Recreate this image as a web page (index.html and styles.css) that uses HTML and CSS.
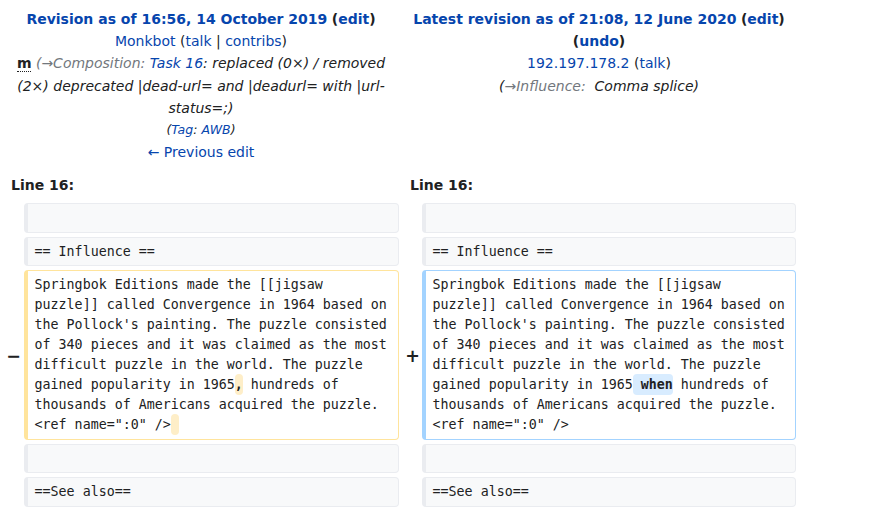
FILE: index.html
```html
<!DOCTYPE html>
<html>
<head>
<meta charset="utf-8">
<link rel="stylesheet" href="styles.css">
</head>
<body>
<div class="diff">
  <div class="titles">
    <div class="title">
      <div><a class="strong" href="#">Revision as of 16:56, 14 October 2019</a> <span class="strong">(<a href="#">edit</a>)</span></div>
      <div><a href="#">Monkbot</a> (<a href="#">talk</a> | <a href="#">contribs</a>)</div>
      <div><abbr class="minor">m</abbr> <span class="comment"><span class="auto">(→Composition: </span><a href="#">Task 16</a>: replaced (0×) / removed (2×) deprecated |dead-url= and |deadurl= with |url-status=;)</span></div>
      <div class="tags">(<a href="#">Tag</a>: <a href="#">AWB</a>)</div>
      <div><a href="#">← Previous edit</a></div>
    </div>
    <div class="title">
      <div><a class="strong" href="#">Latest revision as of 21:08, 12 June 2020</a> <span class="strong">(<a href="#">edit</a>)</span> <span class="strong">(<a href="#">undo</a>)</span></div>
      <div><a href="#">192.197.178.2</a> (<a href="#">talk</a>)</div>
      <div><span class="comment">(<span class="auto">→Influence: </span>&nbsp;Comma splice)</span></div>
    </div>
  </div>
  <div class="rows">
    <div class="lineno left">Line 16:</div>
    <div class="lineno right">Line 16:</div>

    <div class="marker"></div>
    <div class="cell context"></div>
    <div class="marker"></div>
    <div class="cell context"></div>

    <div class="marker"></div>
    <div class="cell context">== Influence ==</div>
    <div class="marker"></div>
    <div class="cell context">== Influence ==</div>

    <div class="marker">−</div>
    <div class="cell deleted">Springbok Editions made the [[jigsaw puzzle]] called Convergence in 1964 based on the Pollock's painting. The puzzle consisted of 340 pieces and it was claimed as the most difficult puzzle in the world. The puzzle gained popularity in 1965<span class="change">,</span> hundreds of thousands of Americans acquired the puzzle. &lt;ref name=":0" /&gt;<span class="change">&nbsp;</span></div>
    <div class="marker plus">+</div>
    <div class="cell added">Springbok Editions made the [[jigsaw puzzle]] called Convergence in 1964 based on the Pollock's painting. The puzzle consisted of 340 pieces and it was claimed as the most difficult puzzle in the world. The puzzle gained popularity in 1965<span class="change"> when</span> hundreds of thousands of Americans acquired the puzzle. &lt;ref name=":0" /&gt;</div>

    <div class="marker"></div>
    <div class="cell context"></div>
    <div class="marker"></div>
    <div class="cell context"></div>

    <div class="marker"></div>
    <div class="cell context">==See also==</div>
    <div class="marker"></div>
    <div class="cell context">==See also==</div>
  </div>
</div>
</body>
</html>
```

FILE: styles.css
```css
html, body {
  margin: 0;
  padding: 0;
  background: #ffffff;
}
body {
  padding: 8px 8px 0 8px;
  font-family: "DejaVu Sans", sans-serif;
  font-size: 14px;
  color: #202122;
}
a {
  color: #0645ad;
  text-decoration: none;
}
.titles {
  display: grid;
  grid-template-columns: 386px 394px;
  column-gap: 8px;
  width: 788px;
}
.title {
  text-align: center;
  line-height: 22.2px;
}
.strong {
  font-weight: bold;
}
.minor {
  font-weight: bold;
  text-decoration: none;
  border-bottom: 1px dotted #202122;
  cursor: help;
}
.comment {
  font-style: italic;
  color: #202122;
}
.auto {
  color: #72777d;
}
.tags {
  font-style: italic;
  font-size: 12.5px;
}
.rows {
  display: grid;
  grid-template-columns: 16px 375px 23px 374px;
  row-gap: 4px;
  margin-top: 11px;
}
.lineno {
  font-weight: bold;
  font-size: 14px;
  line-height: 22px;
  padding-bottom: 3px;
}
.lineno.left {
  grid-column: 1 / span 2;
  padding-left: 3px;
}
.lineno.right {
  grid-column: 3 / span 2;
  padding-left: 11px;
}
.marker {
  font-family: "DejaVu Sans", sans-serif;
  font-weight: bold;
  font-size: 17.5px;
  padding-right: 3px;
  display: flex;
  align-items: center;
  justify-content: flex-end;
  padding-top: 2px;
}
.marker.plus {
  padding-right: 2px;
}
.cell {
  font-family: "DejaVu Sans Mono", monospace;
  font-size: 13.3px;
  line-height: 20px;
  white-space: pre-wrap;
  word-wrap: break-word;
  border-style: solid;
  border-width: 1px 1px 1px 4px;
  border-radius: 4px;
  padding: 3.75px 6.6px;
  min-height: 20px;
  color: #202122;
}
.context {
  background: #f8f9fa;
  border-color: #eaecf0;
}
.deleted {
  background: #ffffff;
  border-color: #ffe49c;
}
.added {
  background: #ffffff;
  border-color: #a3d3ff;
}
.change {
  font-weight: bold;
  border-radius: 4px;
  padding: 3px 0;
}
.deleted .change {
  background: #feeec8;
}
.added .change {
  background: #d8ecff;
}
```
